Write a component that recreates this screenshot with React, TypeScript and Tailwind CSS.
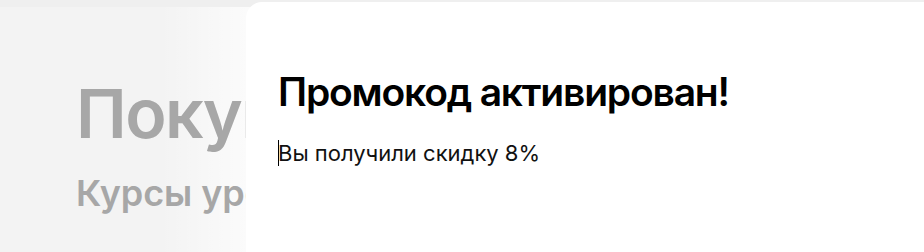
import React from 'react'

// Background page (dimmed) with a promo-code modal sliding over it
export default function App() {
  return (
    <div
      className="relative w-[924px] h-[252px] overflow-hidden bg-[#f3f3f3]"
      style={{ fontFamily: 'Inter, "Noto Sans", sans-serif' }}
    >
      {/* soft light near the panel edge */}
      <div className="absolute top-[7px] bottom-0 left-[160px] w-[90px] bg-gradient-to-r from-transparent to-white/70" />

      <div className="relative h-[7px] bg-[#efefef]" />
      <div className="relative pl-[76px] pt-[66px] flex flex-col">
        <h1 className="text-[68px] leading-[80px] font-semibold text-[#a7a7a7] tracking-[-1.5px] whitespace-nowrap">
          Покупка курса
        </h1>
        <h2 className="mt-[20px] text-[36px] leading-[40px] font-semibold text-[#a7a7a7] tracking-[-0.1px] whitespace-nowrap">
          Курсы уровня
        </h2>
      </div>

      {/* modal panel */}
      <div className="absolute left-[246px] top-[2px] right-0 bottom-0 bg-white rounded-tl-[16px] pl-[32px] pt-[65px]">
        <div className="text-[39px] leading-[50px] font-semibold text-black tracking-[-1.2px] whitespace-nowrap">
          Промокод активирован!
        </div>
        <div className="mt-[22px] flex items-center">
          <span className="w-px h-[26px] bg-black -mr-px" />
          <span className="text-[22px] leading-[28px] text-[#111]">Вы получили скидку 8%</span>
        </div>
      </div>
    </div>
  )
}
